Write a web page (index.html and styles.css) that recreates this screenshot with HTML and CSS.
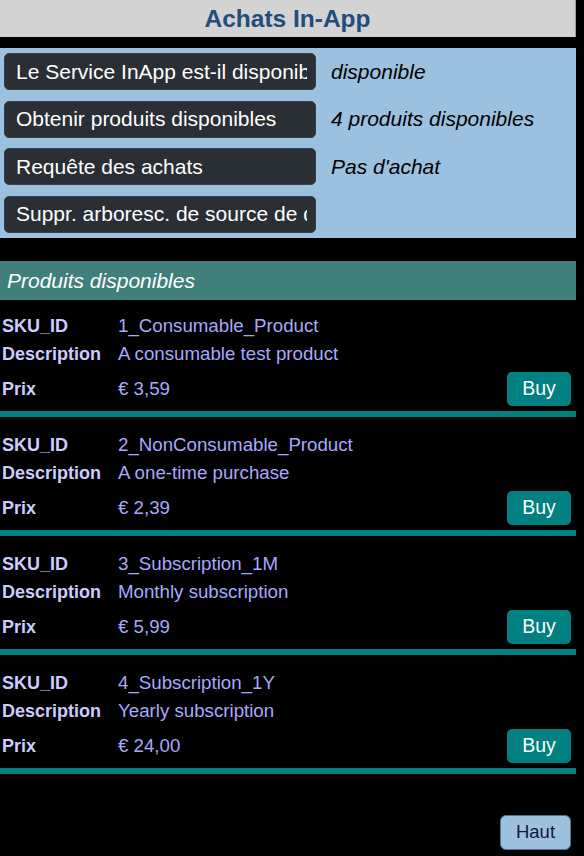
FILE: index.html
```html
<!DOCTYPE html>
<html lang="fr">
<head>
<meta charset="utf-8">
<title>Achats In-App</title>
<link rel="stylesheet" href="styles.css">
</head>
<body>
<div class="page">
  <header class="title-bar"><h1>Achats In-App</h1></header>

  <section class="actions">
    <div class="action-row">
      <button class="action-btn"><span class="btn-text">Le Service InApp est-il disponible ?</span></button>
      <span class="action-result">disponible</span>
    </div>
    <div class="action-row">
      <button class="action-btn"><span class="btn-text">Obtenir produits disponibles</span></button>
      <span class="action-result">4 produits disponibles</span>
    </div>
    <div class="action-row">
      <button class="action-btn"><span class="btn-text">Requête des achats</span></button>
      <span class="action-result">Pas d'achat</span>
    </div>
    <div class="action-row">
      <button class="action-btn"><span class="btn-text">Suppr. arboresc. de source de données</span></button>
      <span class="action-result"></span>
    </div>
  </section>

  <h2 class="section-title">Produits disponibles</h2>

  <div class="products">
    <div class="product">
      <div class="label">SKU_ID</div><div class="value">1_Consumable_Product</div>
      <div class="label">Description</div><div class="value">A consumable test product</div>
      <div class="label price-label">Prix</div>
      <div class="value price-row"><span>€ 3,59</span><button class="buy">Buy</button></div>
    </div>
    <div class="product">
      <div class="label">SKU_ID</div><div class="value">2_NonConsumable_Product</div>
      <div class="label">Description</div><div class="value">A one-time purchase</div>
      <div class="label price-label">Prix</div>
      <div class="value price-row"><span>€ 2,39</span><button class="buy">Buy</button></div>
    </div>
    <div class="product">
      <div class="label">SKU_ID</div><div class="value">3_Subscription_1M</div>
      <div class="label">Description</div><div class="value">Monthly subscription</div>
      <div class="label price-label">Prix</div>
      <div class="value price-row"><span>€ 5,99</span><button class="buy">Buy</button></div>
    </div>
    <div class="product">
      <div class="label">SKU_ID</div><div class="value">4_Subscription_1Y</div>
      <div class="label">Description</div><div class="value">Yearly subscription</div>
      <div class="label price-label">Prix</div>
      <div class="value price-row"><span>€ 24,00</span><button class="buy">Buy</button></div>
    </div>
  </div>

  <div class="footer">
    <button class="top-btn">Haut</button>
  </div>
</div>
</body>
</html>
```

FILE: styles.css
```css
html, body {
  margin: 0;
  padding: 0;
  background: #000;
}

body {
  font-family: "Liberation Sans", Arial, sans-serif;
}

.page {
  width: 576px;
}

.title-bar {
  height: 37px;
  background: #d3d3d3;
  border-right: 1px solid #9a9a9a;
  box-sizing: border-box;
  display: flex;
  align-items: center;
  justify-content: center;
}

.title-bar h1 {
  margin: 0;
  font-size: 24.5px;
  font-weight: bold;
  color: #1f4e79;
}

.actions {
  margin-top: 11px;
  background: #9bc1de;
  padding: 5px 0 5px 4px;
  display: flex;
  flex-direction: column;
  gap: 10.6px;
}

.action-row {
  display: flex;
  align-items: center;
  gap: 15px;
}

.action-btn {
  width: 312px;
  height: 37px;
  flex: none;
  display: flex;
  align-items: center;
  background: #2a2e35;
  color: #fff;
  border: 1px solid #3a3f47;
  border-radius: 5px;
  padding: 0 8px 0 11px;
  text-align: left;
  font-family: "Liberation Sans", Arial, sans-serif;
  font-size: 21px;
}

.btn-text {
  display: block;
  width: 100%;
  white-space: nowrap;
  overflow: hidden;
}

.action-result {
  font-style: italic;
  font-size: 21px;
  color: #000;
}

.section-title {
  margin: 23px 0 0;
  height: 39px;
  background: #417f7c;
  color: #fff;
  font-size: 21px;
  font-weight: normal;
  font-style: italic;
  line-height: 39px;
  padding-left: 7px;
}

.product {
  display: grid;
  grid-template-columns: 116px 1fr;
  grid-template-rows: 28px 28px 43px;
  padding-top: 12px;
  padding-left: 2px;
  border-bottom: 6px solid #008080;
}

.product + .product {
  padding-top: 14px;
}

.label {
  font-size: 18px;
  font-weight: bold;
  color: #ccccff;
  line-height: 28px;
}

.value {
  font-size: 18.7px;
  color: #a8a8ff;
  line-height: 28px;
}

.price-label {
  line-height: 42px;
}

.price-row {
  display: flex;
  align-items: flex-start;
  justify-content: space-between;
  padding: 4px 5px 0 0;
}

.price-row span {
  line-height: 34px;
}

.buy {
  height: 34px;
  width: 64px;
  background: #008080;
  color: #fff;
  border: none;
  border-radius: 5px;
  font-family: "Liberation Sans", Arial, sans-serif;
  font-size: 19.5px;
  padding: 0;
}

.footer {
  display: flex;
  justify-content: flex-end;
  padding: 41px 5px 0 0;
}

.top-btn {
  width: 71px;
  height: 35px;
  background: #9bc1de;
  color: #14183a;
  border: 1px solid #56728a;
  border-radius: 6px;
  font-family: "Liberation Sans", Arial, sans-serif;
  font-size: 18.5px;
  padding: 0;
}
```
